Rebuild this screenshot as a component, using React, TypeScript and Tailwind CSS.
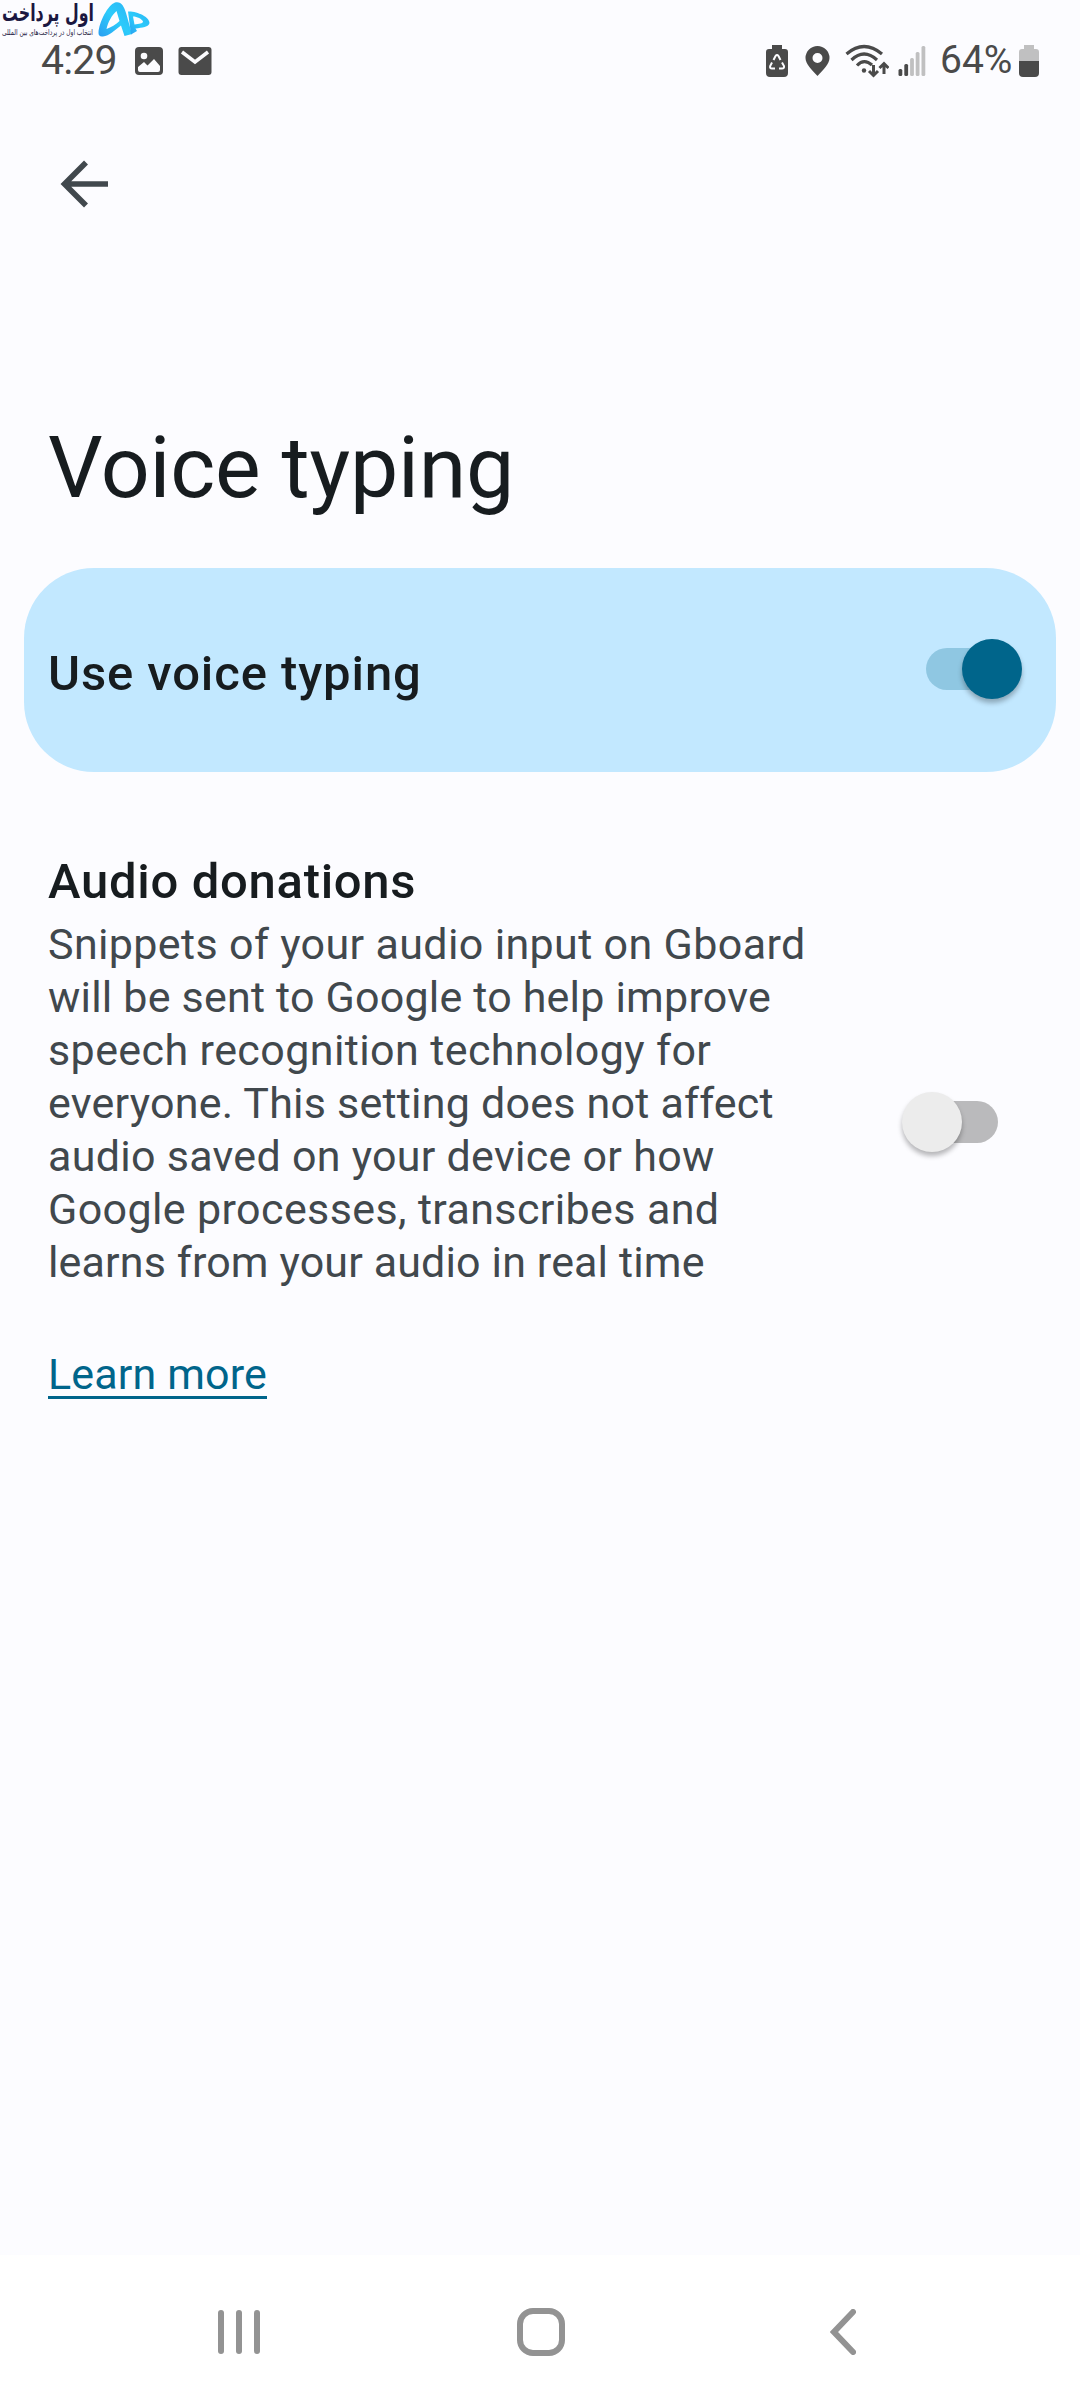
import { useState } from 'react';

type SwitchProps = {
  checked: boolean;
  onChange: (checked: boolean) => void;
  label: string;
};

const Switch = ({ checked, onChange, label }: SwitchProps) => (
  <button
    type="button"
    role="switch"
    aria-checked={checked}
    aria-label={label}
    onClick={() => onChange(!checked)}
    className={`flex h-[60px] w-[96px] shrink-0 items-center ${checked ? 'justify-end' : 'justify-start'}`}
  >
    {/* Track, tucked under the thumb */}
    <span
      className={`h-[42px] w-[78px] rounded-full ${checked ? '-mr-[42px] bg-[#8fc7e2]' : 'order-2 -ml-[42px] bg-[#bababc]'}`}
    />
    <span
      className={`relative z-10 size-[60px] rounded-full shadow-[0_4px_5px_rgba(0,0,0,0.28)] ${checked ? 'bg-[#00658b]' : 'bg-[#ececec]'}`}
    />
  </button>
);

const Watermark = () => (
  <svg className="absolute left-0 top-0" width="152" height="40" viewBox="0 0 152 40">
    <defs>
      <linearGradient id="brand" x1="0" y1="1" x2="1" y2="0">
        <stop offset="0" stopColor="#2a9df0" />
        <stop offset="0.5" stopColor="#2ccbfb" />
        <stop offset="1" stopColor="#2bb4f4" />
      </linearGradient>
    </defs>
    <text x="94" y="21" direction="rtl" fontSize="24" fontWeight="700" textLength="92" lengthAdjust="spacingAndGlyphs" fill="#1b1740" fontFamily="DejaVu Sans, sans-serif">
      اول پرداخت
    </text>
    <text x="93" y="35" direction="rtl" fontSize="8" textLength="91" lengthAdjust="spacingAndGlyphs" fill="#1b1740" fontFamily="DejaVu Sans, sans-serif">
      انتخاب اول در پرداخت‌های بین المللی
    </text>
    <path
      fillRule="evenodd"
      d="M98.5 33 C99 22 108 5 115 2.5 C121 1 124 6 126 13 L132 34 L124.5 36 L121 25.5 C115 30 109 36 103 36.5 C100 37 98.5 35.5 98.5 33 Z M116.5 11 C112 15 108 22 106.5 29 C111 27.5 116 24.5 119.5 21 Z"
      fill="url(#brand)"
    />
    <path
      fillRule="evenodd"
      d="M128 11.5 C137 11 149.5 17 149.5 23 C149 27 142 27.5 135.5 28.5 L137 31 L131 34.5 Z M133 16.5 L134.5 24.5 C139 24 143 23.5 143 21.5 C142 19 137 16.5 133 16.5 Z"
      fill="url(#brand)"
    />
  </svg>
);

const StatusBar = () => (
  <header className="flex h-[120px] items-start justify-between px-[41px] pt-9 text-[#4a4a4a]">
    <div className="flex h-12 items-center">
      <span className="w-[94px] text-[41px] leading-[48px] tracking-[-0.8px]">4:29</span>
      <svg width="28" height="28" viewBox="0 0 28 28" className="mt-[2px]">
        <rect width="28" height="28" rx="4" fill="#4a4a4a" />
        <circle cx="9" cy="9" r="3.3" fill="#fcfcff" />
        <path d="M3 23 V20 L9 15 L12.5 18.5 L19 12 L25 19 V23 Q25 25 23 25 H5 Q3 25 3 23 Z" fill="#fcfcff" />
      </svg>
      <svg width="34" height="28" viewBox="0 0 34 28" className="ml-[15px] mt-[2px]">
        <rect x="0.5" width="33" height="28" rx="3" fill="#4a4a4a" />
        <path d="M4 5 L17 15 L30 5" fill="none" stroke="#fcfcff" strokeWidth="3.5" />
      </svg>
    </div>

    <div className="flex h-12 items-center">
      {/* Battery saver */}
      <svg width="22" height="32" viewBox="0 0 22 32" className="mt-[2px]">
        <path d="M6 0 H16 V4 H19 Q22 4 22 7 V28 Q22 32 18 32 H4 Q0 32 0 28 V7 Q0 4 3 4 H6 Z" fill="#4a4a4a" />
        <path d="M7.5 15 L9.5 11 Q11 9 12.5 11 L14.5 15 M16 17.5 L18 21 Q18.5 23.5 16 23.5 H13 M9 23.5 H6 Q3.5 23.5 4.2 21 L6 17.5" fill="none" stroke="#fcfcff" strokeWidth="2" />
      </svg>
      {/* Location */}
      <svg width="25" height="30" viewBox="0 0 25 30" className="ml-[17px] mt-[1px]">
        <path fillRule="evenodd" d="M12.5 0 A12 12 0 0 1 24.5 12 C24.5 18 18 24 12.5 30 C7 24 0.5 18 0.5 12 A12 12 0 0 1 12.5 0 Z M12.5 7 A5 5 0 1 0 12.5 17 A5 5 0 1 0 12.5 7 Z" fill="#4a4a4a" />
      </svg>
      {/* Wi-Fi with traffic arrows */}
      <svg width="44" height="34" viewBox="0 0 44 34" className="ml-[15px] mt-[2px]" fill="none" stroke="#4a4a4a" strokeWidth="3.2">
        <path d="M1.5 10 Q19 -5 37 10 M6.5 16 Q19 4 32 16 M12 21.5 Q19 14 27 21" />
        <circle cx="19" cy="26.5" r="2.2" fill="#4a4a4a" stroke="none" />
        <path d="M28.5 21 V31 M24 27 L28.5 31.5 L33 27 M39 30 V20 M34.5 24 L39 19.5 L43.5 24" strokeWidth="3" />
      </svg>
      <svg width="28" height="30" viewBox="0 0 28 30" className="ml-[9px] mt-[1px]">
        <rect x="0.5" y="23" width="3.8" height="7" rx="1.5" fill="#4a4a4a" />
        <rect x="6.3" y="18" width="3.8" height="12" rx="1.5" fill="#4a4a4a" />
        <rect x="12.1" y="12" width="3.8" height="18" rx="1.5" fill="#c0c0c1" />
        <rect x="17.7" y="6" width="3.8" height="24" rx="1.5" fill="#c0c0c1" />
        <rect x="23.5" y="0" width="3.8" height="30" rx="1.5" fill="#c0c0c1" />
      </svg>
      <span className="ml-[14px] w-[79px] text-[39px] leading-[48px]">64%</span>
      <svg width="20" height="32" viewBox="0 0 20 32" className="mt-[2px]">
        <path d="M5 0 H15 V4 H17 Q20 4 20 7 V16 H0 V7 Q0 4 3 4 H5 Z" fill="#c0c0c1" />
        <path d="M0 16 H20 V28 Q20 32 16 32 H4 Q0 32 0 28 Z" fill="#4a4a4a" />
      </svg>
    </div>
  </header>
);

const NavBar = () => (
  <nav className="flex h-[145px] items-center bg-white pl-[217px] pr-[224px] pt-[9px]">
    <svg width="44" height="46" viewBox="0 0 44 46" fill="#939393">
      <rect x="1" y="1" width="6" height="44" rx="3" />
      <rect x="19" y="1" width="6" height="44" rx="3" />
      <rect x="37" y="1" width="6" height="44" rx="3" />
    </svg>
    <svg width="48" height="48" viewBox="0 0 48 48" className="ml-[256px]">
      <rect x="3" y="3" width="42" height="42" rx="13" fill="none" stroke="#939393" strokeWidth="6" />
    </svg>
    <svg width="26" height="46" viewBox="0 0 26 46" className="ml-auto">
      <path d="M23 3 L4 23 L23 43" fill="none" stroke="#939393" strokeWidth="6" strokeLinecap="round" />
    </svg>
  </nav>
);

const donationLines = [
  { text: 'Snippets of your audio input on Gboard', tracking: 'tracking-[0.36px]' },
  { text: 'will be sent to Google to help improve', tracking: 'tracking-[0.2px]' },
  { text: 'speech recognition technology for', tracking: 'tracking-[0.4px]' },
  { text: 'everyone. This setting does not affect', tracking: 'tracking-[0.22px]' },
  { text: 'audio saved on your device or how', tracking: 'tracking-[0.28px]' },
  { text: 'Google processes, transcribes and', tracking: 'tracking-[0.38px]' },
  { text: 'learns from your audio in real time', tracking: 'tracking-[0.14px]' }
];

const App = () => {
  const [voiceTyping, setVoiceTyping] = useState(true);
  const [donations, setDonations] = useState(false);

  return (
    <div className="relative flex h-[2400px] w-[1080px] flex-col overflow-hidden bg-[#fcfcff] font-[Roboto,sans-serif] text-[#171c1f]">
      <StatusBar />
      <Watermark />

      <main className="flex grow flex-col">
        <button type="button" aria-label="Back" className="ml-[60px] mt-10 self-start">
          <svg width="48" height="48" viewBox="0 0 48 48" fill="none" stroke="#41484d" strokeWidth="5.6">
            <path d="M26 2.5 L4.5 24 L26 45.5 M4 24 H48" />
          </svg>
        </button>

        <h1 className="mt-[210px] pl-12 text-[86px] leading-[100px] tracking-[-0.2px]">Voice typing</h1>

        <section className="mx-6 mt-[50px] flex h-[204px] items-start justify-between rounded-[70px] bg-[#c2e8ff] pl-6 pr-[34px]">
          <h2 className="mt-[76px] text-[49px] font-medium leading-[60px] tracking-[0.9px]">Use voice typing</h2>
          <div className="mt-[71px]">
            <Switch checked={voiceTyping} onChange={setVoiceTyping} label="Use voice typing" />
          </div>
        </section>

        <section className="mt-20 flex items-start justify-between pl-12 pr-[82px]">
          <div>
            <h2 className="text-[49px] font-medium leading-[60px] tracking-[0.7px]">Audio donations</h2>
            <p className="mt-[6px] text-[43px] leading-[53px] text-[#41484d]">
              {donationLines.map((line) => (
                <span key={line.text} className={`block whitespace-nowrap ${line.tracking}`}>{line.text}</span>
              ))}
            </p>
          </div>
          <div className="mt-[240px]">
            <Switch checked={donations} onChange={setDonations} label="Audio donations" />
          </div>
        </section>

        <a href="#learn-more" className="ml-12 mt-[63px] self-start border-b-[3px] border-[#00658b] text-[43px] leading-[44px] tracking-[0.15px] text-[#00658b]">
          Learn more
        </a>
      </main>

      <NavBar />
    </div>
  );
};

export default App;
